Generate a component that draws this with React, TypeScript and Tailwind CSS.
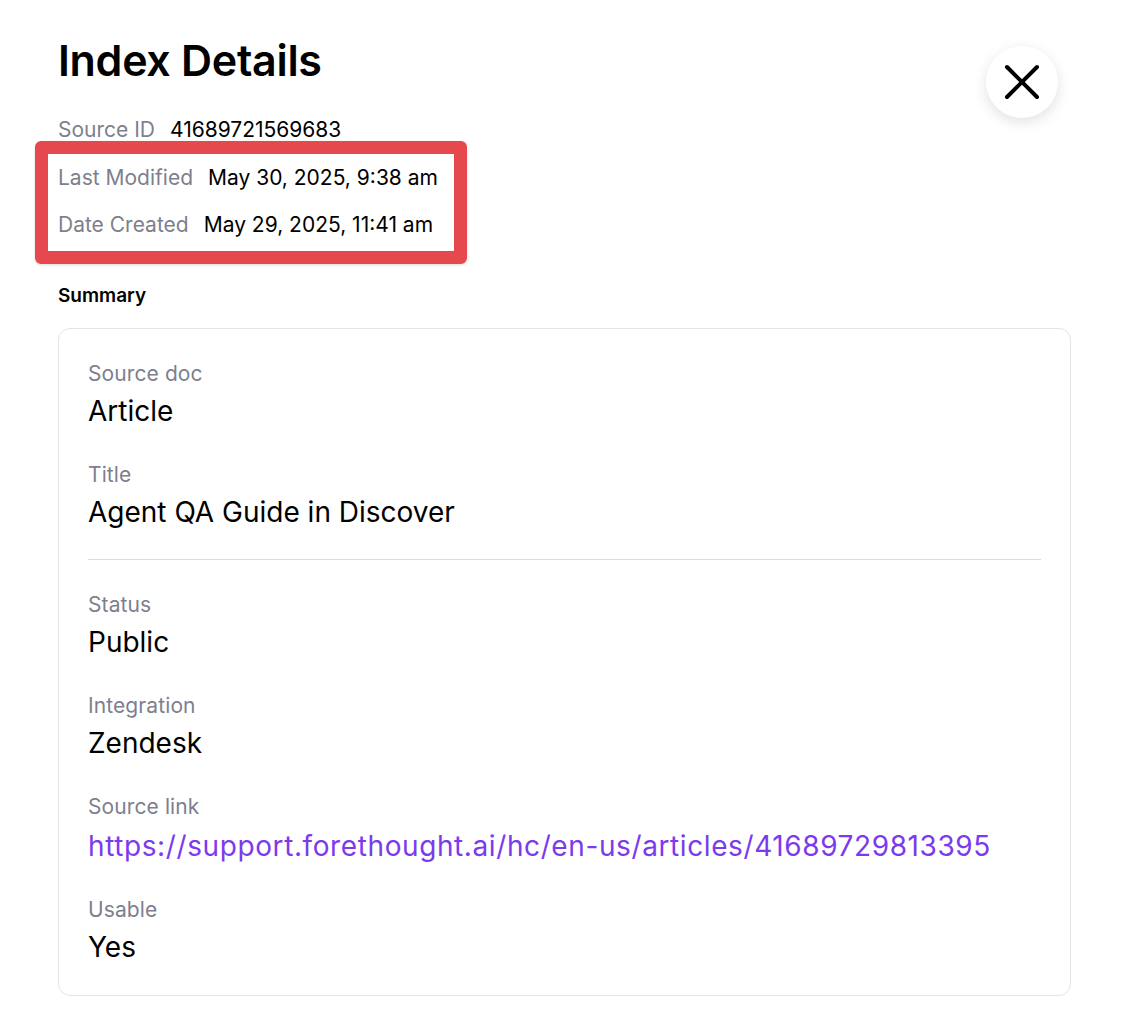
import { X } from 'lucide-react'

const font = { fontFamily: 'Inter, "Noto Sans", sans-serif' }

function Field({ label, children }: { label: string; children: React.ReactNode }) {
  return (
    <div className="flex flex-col gap-[6px]">
      <div className="text-[21px] leading-[26px] text-[#7d7f8e] tracking-[0.1px]">{label}</div>
      <div className="text-[28px] leading-[36px] text-black">{children}</div>
    </div>
  )
}

function MetaRow({ label, value }: { label: string; value: string }) {
  return (
    <div className="flex items-center gap-[15px] h-[47px]">
      <span className="text-[21px] text-[#7d7f8e]">{label}</span>
      <span className="text-[21px] text-black">{value}</span>
    </div>
  )
}

export default function App() {
  return (
    <div className="min-h-screen bg-white" style={font}>
      <div className="relative px-[58px] pt-[30px] pb-[16px]">
        <button className="absolute right-[72px] top-[46px] w-[72px] h-[72px] rounded-full bg-white shadow-[0_4px_14px_rgba(0,0,0,0.12)] flex items-center justify-center">
          <X className="w-[60px] h-[60px] text-black" strokeWidth={1.6} />
        </button>

        <h1 className="text-[43px] leading-[60px] font-semibold text-black tracking-[-0.3px]">Index Details</h1>

        <div className="mt-[16px]">
          <MetaRow label="Source ID" value="41689721569683" />
          <div className="-mx-[23px] -mt-[12px] border-[13px] border-[#e5484d] rounded-[6px] px-[10px] pb-[3px] w-[432px] shadow-[0_1px_3px_rgba(0,0,0,0.15)]">
            <MetaRow label="Last Modified" value="May 30, 2025, 9:38 am" />
            <MetaRow label="Date Created" value="May 29, 2025, 11:41 am" />
          </div>
        </div>

        <div className="mt-[20px] text-[19px] leading-[24px] font-semibold text-black">Summary</div>

        <div className="mt-[20px] w-[1013px] border border-[#e3e4e8] rounded-[12px] px-[29px] pt-[32px] pb-[30px]">
          <div className="flex flex-col gap-[33px]">
            <Field label="Source doc">Article</Field>
            <Field label="Title">Agent QA Guide in Discover</Field>
          </div>
          <div className="mt-[29px] mb-[32px] border-t border-[#dcdde2]" />
          <div className="flex flex-col gap-[33px]">
            <Field label="Status">Public</Field>
            <Field label="Integration">Zendesk</Field>
            <Field label="Source link">
              <span className="block mt-[2px] text-[#7c3aed] tracking-[0.6px]">https://support.forethought.ai/hc/en-us/articles/41689729813395</span>
            </Field>
            <Field label="Usable">Yes</Field>
          </div>
        </div>
      </div>
    </div>
  )
}
